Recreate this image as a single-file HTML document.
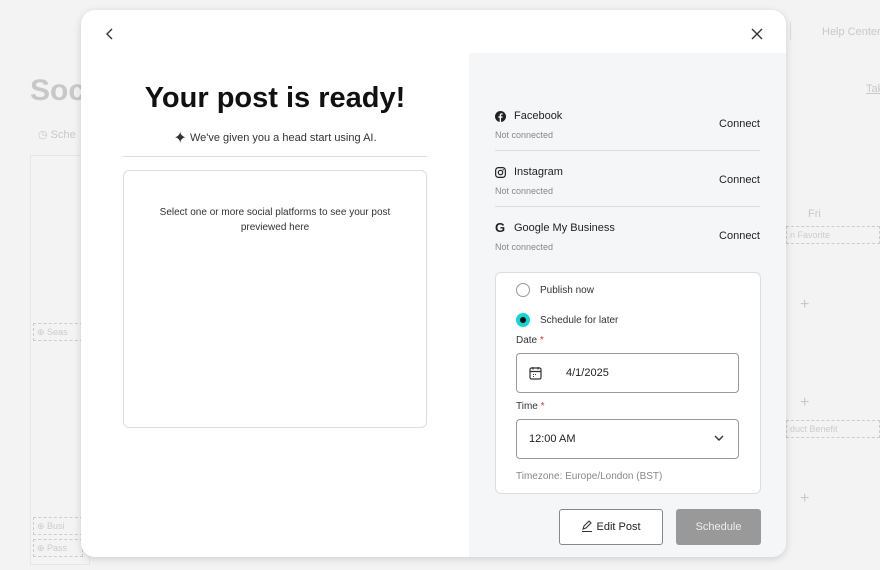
<!DOCTYPE html>
<html><head><meta charset="utf-8"><style>
*{box-sizing:border-box;margin:0;padding:0}
body{width:880px;height:570px;overflow:hidden;background:#f3f3f3;font-family:"Liberation Sans",sans-serif;position:relative;color:#222}
.abs{position:absolute;white-space:nowrap}
.bg{color:#c8c8c8}
.modal{position:absolute;left:81px;top:10px;width:705px;height:547px;background:#fff;border-radius:14px;box-shadow:0 2px 8px rgba(0,0,0,.15);overflow:hidden}
.right{position:absolute;left:388px;top:43px;width:317px;height:504px;background:#f5f6f8}
.row{position:absolute;left:26px;width:265px;height:44px;border-bottom:1px solid #ddd}
.row .n{position:absolute;left:19px;top:3px;font-size:11px;color:#222}
.row .s{position:absolute;left:0;top:23px;font-size:9px;color:#888}
.row .c{position:absolute;right:0;top:11px;font-size:11px;color:#222}
.row svg{position:absolute;left:0;top:4px}
.card{position:absolute;left:26px;top:219px;width:266px;height:222px;background:#fff;border:1px solid #ddd;border-radius:6px}
.lbl{position:absolute;font-size:10px;color:#333}
.inp{position:absolute;left:20px;width:223px;height:40px;border:1px solid #999;border-radius:4px;font-size:11px}
</style></head><body>
<div class="abs bg" style="left:30px;top:74px;font-size:30px;font-weight:bold">Soc</div>
<div class="abs bg" style="left:822px;top:26px;font-size:11px">Help Center</div>
<div class="abs" style="left:790px;top:22px;width:1px;height:18px;background:#ddd"></div>
<div class="abs bg" style="left:866px;top:83px;font-size:11px;text-decoration:underline">Tak</div>
<div class="abs bg" style="left:38px;top:128px;font-size:11px">◷ Sche</div>
<div class="abs" style="left:30px;top:155px;width:60px;height:410px;border:1px solid #e6e6e6"></div>
<div class="abs bg" style="left:808px;top:208px;font-size:11px">Fri</div>
<div class="abs" style="left:786px;top:226px;width:94px;height:18px;border:1px dashed #ccc;font-size:9px;color:#ccc;padding:3px">n Favorite</div>
<div class="abs" style="left:786px;top:420px;width:94px;height:18px;border:1px dashed #ccc;font-size:9px;color:#ccc;padding:3px">duct Benefit</div>
<div class="abs bg" style="left:800px;top:296px;font-size:16px">+</div>
<div class="abs bg" style="left:800px;top:394px;font-size:16px">+</div>
<div class="abs bg" style="left:800px;top:490px;font-size:16px">+</div>
<div class="abs" style="left:33px;top:323px;width:50px;height:18px;border:1px dashed #ccc;font-size:9px;color:#ccc;padding:3px">⊕ Seas</div>
<div class="abs" style="left:33px;top:517px;width:50px;height:18px;border:1px dashed #ccc;font-size:9px;color:#ccc;padding:3px">⊕ Busi</div>
<div class="abs" style="left:33px;top:539px;width:50px;height:18px;border:1px dashed #ccc;font-size:9px;color:#ccc;padding:3px">⊕ Pass</div>

<div class="modal">
 <svg class="abs" style="left:24px;top:18px" width="10" height="12" viewBox="0 0 10 12"><path d="M7 1L2 6l5 5" stroke="#333" stroke-width="1.4" fill="none"/></svg>
 <svg class="abs" style="left:670px;top:18px" width="12" height="12" viewBox="0 0 12 12"><path d="M1 1l10 10M11 1L1 11" stroke="#333" stroke-width="1.4"/></svg>
 <div class="abs" style="left:42px;top:72px;width:304px;text-align:center;font-size:29px;font-weight:bold;color:#111">Your post is ready!</div>
 <div class="abs" style="left:42px;top:118px;width:304px;text-align:center;font-size:11px;color:#333"><span style="font-size:16px;vertical-align:-2px">✦</span> We've given you a head start using AI.</div>
 <div class="abs" style="left:42px;top:146px;width:304px;height:1px;background:#ddd"></div>
 <div class="abs" style="left:42px;top:160px;width:304px;height:258px;border:1px solid #ddd;border-radius:6px;text-align:center;font-size:10px;line-height:15px;color:#333;padding:34px 20px 0;white-space:normal">Select one or more social platforms to see your post previewed here</div>
 <div class="right">
  <div class="row" style="top:54px"><svg width="11" height="11" viewBox="0 0 12 12"><circle cx="6" cy="6" r="6" fill="#222"/><path d="M6.6 12V7.4h1.5l.2-1.6H6.6v-1c0-.5.1-.8.8-.8h.9V2.6C8 2.5 7.6 2.5 7.2 2.5c-1.3 0-2.1.8-2.1 2.2v1.1H3.7v1.6h1.4V12z" fill="#fff"/></svg><span class="n">Facebook</span><span class="s">Not connected</span><span class="c">Connect</span></div>
  <div class="row" style="top:110px"><svg width="11" height="11" viewBox="0 0 12 12"><rect x=".7" y=".7" width="10.6" height="10.6" rx="3" fill="none" stroke="#222" stroke-width="1.3"/><circle cx="6" cy="6" r="2.4" fill="none" stroke="#222" stroke-width="1.3"/><circle cx="9" cy="3" r=".7" fill="#222"/></svg><span class="n">Instagram</span><span class="s">Not connected</span><span class="c">Connect</span></div>
  <div class="row" style="top:166px;border:none"><span class="abs" style="left:0;top:1px;font-size:13px;font-weight:bold">G</span><span class="n">Google My Business</span><span class="s">Not connected</span><span class="c">Connect</span></div>
  <div class="card">
   <div class="abs" style="left:20px;top:10px;width:14px;height:14px;border:1px solid #999;border-radius:50%"></div>
   <div class="lbl" style="left:44px;top:12px">Publish now</div>
   <div class="abs" style="left:20px;top:40px;width:14px;height:14px;background:#1bd1d1;border-radius:50%"><div style="margin:4px;width:6px;height:6px;background:#111;border-radius:50%"></div></div>
   <div class="lbl" style="left:44px;top:42px">Schedule for later</div>
   <div class="lbl" style="left:20px;top:62px">Date <span style="color:#d33">*</span></div>
   <div class="inp" style="top:80px"><svg class="abs" style="left:12px;top:12px" width="13" height="14" viewBox="0 0 13 14"><rect x="1" y="2" width="11" height="11" rx="1.5" fill="none" stroke="#333" stroke-width="1.2"/><path d="M1 5.5h11M4 1v2.5M9 1v2.5" stroke="#333" stroke-width="1.2"/><path d="M4 8.5h1M6 8.5h1M4 10.5h1" stroke="#333"/></svg><span class="abs" style="left:49px;top:13px">4/1/2025</span></div>
   <div class="lbl" style="left:20px;top:128px">Time <span style="color:#d33">*</span></div>
   <div class="inp" style="top:146px"><span class="abs" style="left:12px;top:13px">12:00 AM</span><svg class="abs" style="left:197px;top:15px" width="10" height="7" viewBox="0 0 10 7"><path d="M1 1l4 4 4-4" stroke="#333" stroke-width="1.4" fill="none"/></svg></div>
   <div class="lbl" style="left:20px;top:198px;color:#888">Timezone: Europe/London (BST)</div>
  </div>
  <div class="abs" style="left:90px;top:456px;width:104px;height:36px;border:1px solid #888;border-radius:3px;background:#fff;font-size:11px;text-align:center;line-height:34px"><svg style="vertical-align:-2px" width="12" height="12" viewBox="0 0 12 12"><path d="M2 9l1-3 5-5 2 2-5 5zM1 11.5h10" stroke="#333" stroke-width="1.1" fill="none"/></svg> Edit Post</div>
  <div class="abs" style="left:207px;top:456px;width:85px;height:36px;background:#999;border-radius:3px;color:#eee;font-size:11px;text-align:center;line-height:36px">Schedule</div>
 </div>
</div>
</body></html>
